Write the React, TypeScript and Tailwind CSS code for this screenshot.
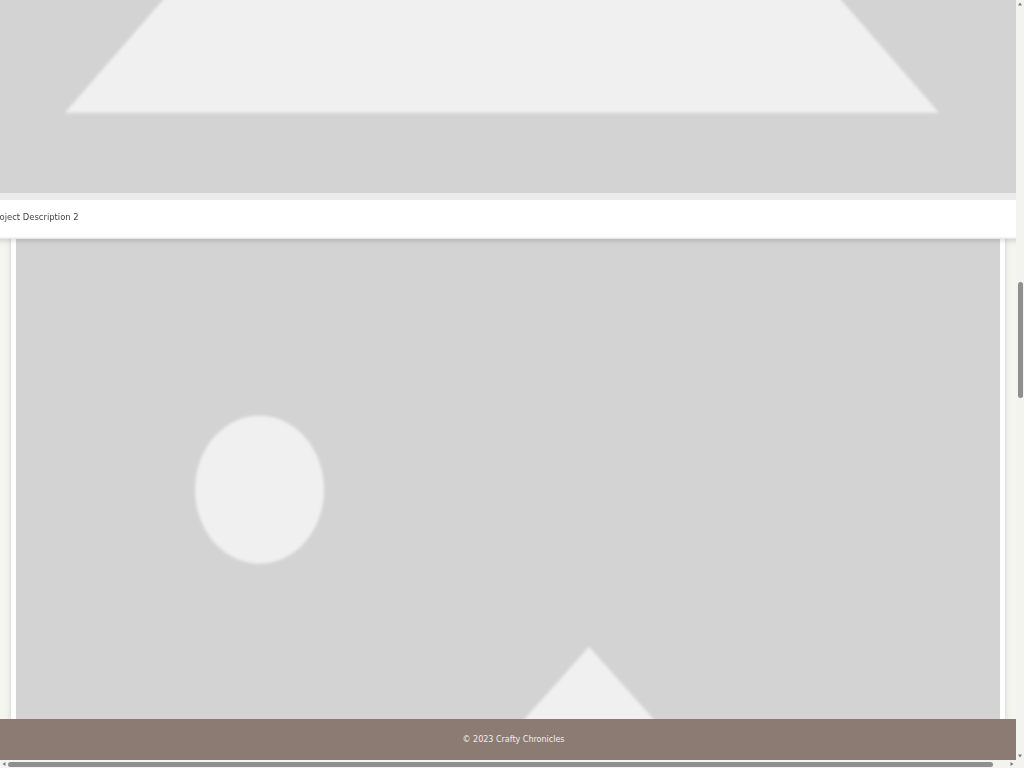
import React, { useLayoutEffect, useEffect, useRef } from "react";

type Card = {
  n: number;
  tri: string;
  cx: number;
  cy: number;
  rx: number;
  ry: number;
  active?: boolean;
};

const cards: Card[] = [
  { n: 1, tri: "150,623 834,623 492,190", cx: 760, cy: 200, rx: 60, ry: 70 },
  { n: 2, tri: "70,623 902.5,623 486.3,143.9", cx: 240, cy: 120, rx: 60, ry: 70, active: true },
  { n: 3, tri: "384,623 762,623 573,410.7", cx: 243.5, cy: 253.7, rx: 64.5, ry: 74 },
  { n: 4, tri: "200,623 780,623 490,260", cx: 700, cy: 230, rx: 62, ry: 72 },
  { n: 5, tri: "120,623 860,623 490,200", cx: 300, cy: 180, rx: 60, ry: 70 },
];

function Placeholder({ c }: { c: Card }) {
  const fid = `soft-${c.n}`;
  return (
    <svg
      width="984"
      height="700"
      viewBox="0 0 984 700"
      className="block w-[984px] h-[700px]"
    >
      <defs>
        <filter id={fid} x="-10%" y="-10%" width="120%" height="120%">
          <feGaussianBlur stdDeviation="1.4" />
        </filter>
      </defs>
      <rect width="984" height="700" fill="#d3d3d3" />
      <g filter={`url(#${fid})`} fill="#f0f0f0">
        <ellipse cx={c.cx} cy={c.cy} rx={c.rx} ry={c.ry} />
        <polygon points={c.tri} />
      </g>
    </svg>
  );
}

function ProjectCard({ c }: { c: Card }) {
  return (
    <div
      className={
        c.active
          ? "relative z-10 scale-[1.05] bg-white border border-[#e2e2e2] p-[5px] shadow-[0_2px_5px_rgba(0,0,0,0.14)]"
          : "relative bg-white border border-[#e2e2e2] p-[5px] shadow-[0_2px_5px_rgba(0,0,0,0.1)]"
      }
    >
      <Placeholder c={c} />
      <div className="h-[37px] pt-[2px] flex items-center bg-white border-t-[6px] border-t-[#ebebeb] text-[8px] leading-none text-[#444444]">
        Project Description {c.n}
      </div>
    </div>
  );
}

function Arrow({ dir }: { dir: "up" | "down" | "left" | "right" }) {
  const pts =
    dir === "up"
      ? "2,5.5 6,5.5 4,2.5"
      : dir === "down"
      ? "2,2.5 6,2.5 4,5.5"
      : dir === "left"
      ? "5.5,2 5.5,6 2.5,4"
      : "2.5,2 2.5,6 5.5,4";
  return (
    <svg width="8" height="8" viewBox="0 0 8 8" className="block shrink-0">
      <polygon points={pts} fill="#7a7a7a" />
    </svg>
  );
}

export default function App() {
  const ref = useRef<HTMLDivElement>(null);
  useLayoutEffect(() => {
    if (ref.current) ref.current.scrollTop = 1796;
  }, []);
  useEffect(() => {
    const t = setTimeout(() => {
      if (ref.current) ref.current.scrollTop = 1796;
    }, 0);
    return () => clearTimeout(t);
  }, []);

  return (
    <div className="h-screen w-screen overflow-hidden flex bg-[#f3f3ef] font-['DejaVu_Sans',sans-serif] text-[#444444]">
      <div className="flex-1 min-w-0 flex flex-col">
        <div ref={ref} className="flex-1 min-h-0 overflow-hidden bg-[#f5f5ef]">
          <header className="h-[60px] bg-[#8c7b73] flex items-center px-[10px] justify-between text-[#f2eee9]">
            <h1 className="text-[16px] font-bold">Crafty Chronicles</h1>
            <nav className="flex gap-4 text-[10px]">
              <span>Home</span>
              <span>Projects</span>
              <span>About</span>
              <span>Contact</span>
            </nav>
          </header>
          <main className="p-[10px] flex flex-col gap-[10px]">
            <section className="h-[428px] flex flex-col justify-center items-center gap-3 text-center">
              <h2 className="text-[20px] font-bold text-[#5a4a43]">Our Projects</h2>
              <p className="text-[10px] max-w-[500px]">
                A collection of handmade crafts, tutorials and creative experiments.
              </p>
            </section>
            {cards.map((c) => (
              <ProjectCard key={c.n} c={c} />
            ))}
            <section className="h-[520px] flex flex-col justify-center items-center gap-3 text-center">
              <h2 className="text-[20px] font-bold text-[#5a4a43]">About</h2>
              <p className="text-[10px] max-w-[500px]">
                Crafty Chronicles shares ideas for makers of every skill level.
              </p>
            </section>
          </main>
          <footer className="sticky bottom-0 z-20 h-[41px] pl-[11px] bg-[#8c7b73] flex items-center justify-center text-[8px] text-[#f2eee9]">
            © 2023 Crafty Chronicles
          </footer>
        </div>
        {/* horizontal scrollbar */}
        <div className="h-[8px] shrink-0 flex items-center bg-[#f3f3ef]">
          <Arrow dir="left" />
          <div className="flex-1 h-[8px] flex items-center">
            <div className="w-[985px] h-[5px] rounded-full bg-[#8f8f8f]" />
          </div>
          <Arrow dir="right" />
        </div>
      </div>
      {/* vertical scrollbar */}
      <div className="w-[8px] shrink-0 flex flex-col pb-[8px] bg-[#f3f3ef]">
        <Arrow dir="up" />
        <div className="flex-1 w-[8px] flex flex-col items-center pt-[274px]">
          <div className="w-[5px] h-[116px] rounded-full bg-[#8f8f8f]" />
        </div>
        <Arrow dir="down" />
      </div>
    </div>
  );
}
